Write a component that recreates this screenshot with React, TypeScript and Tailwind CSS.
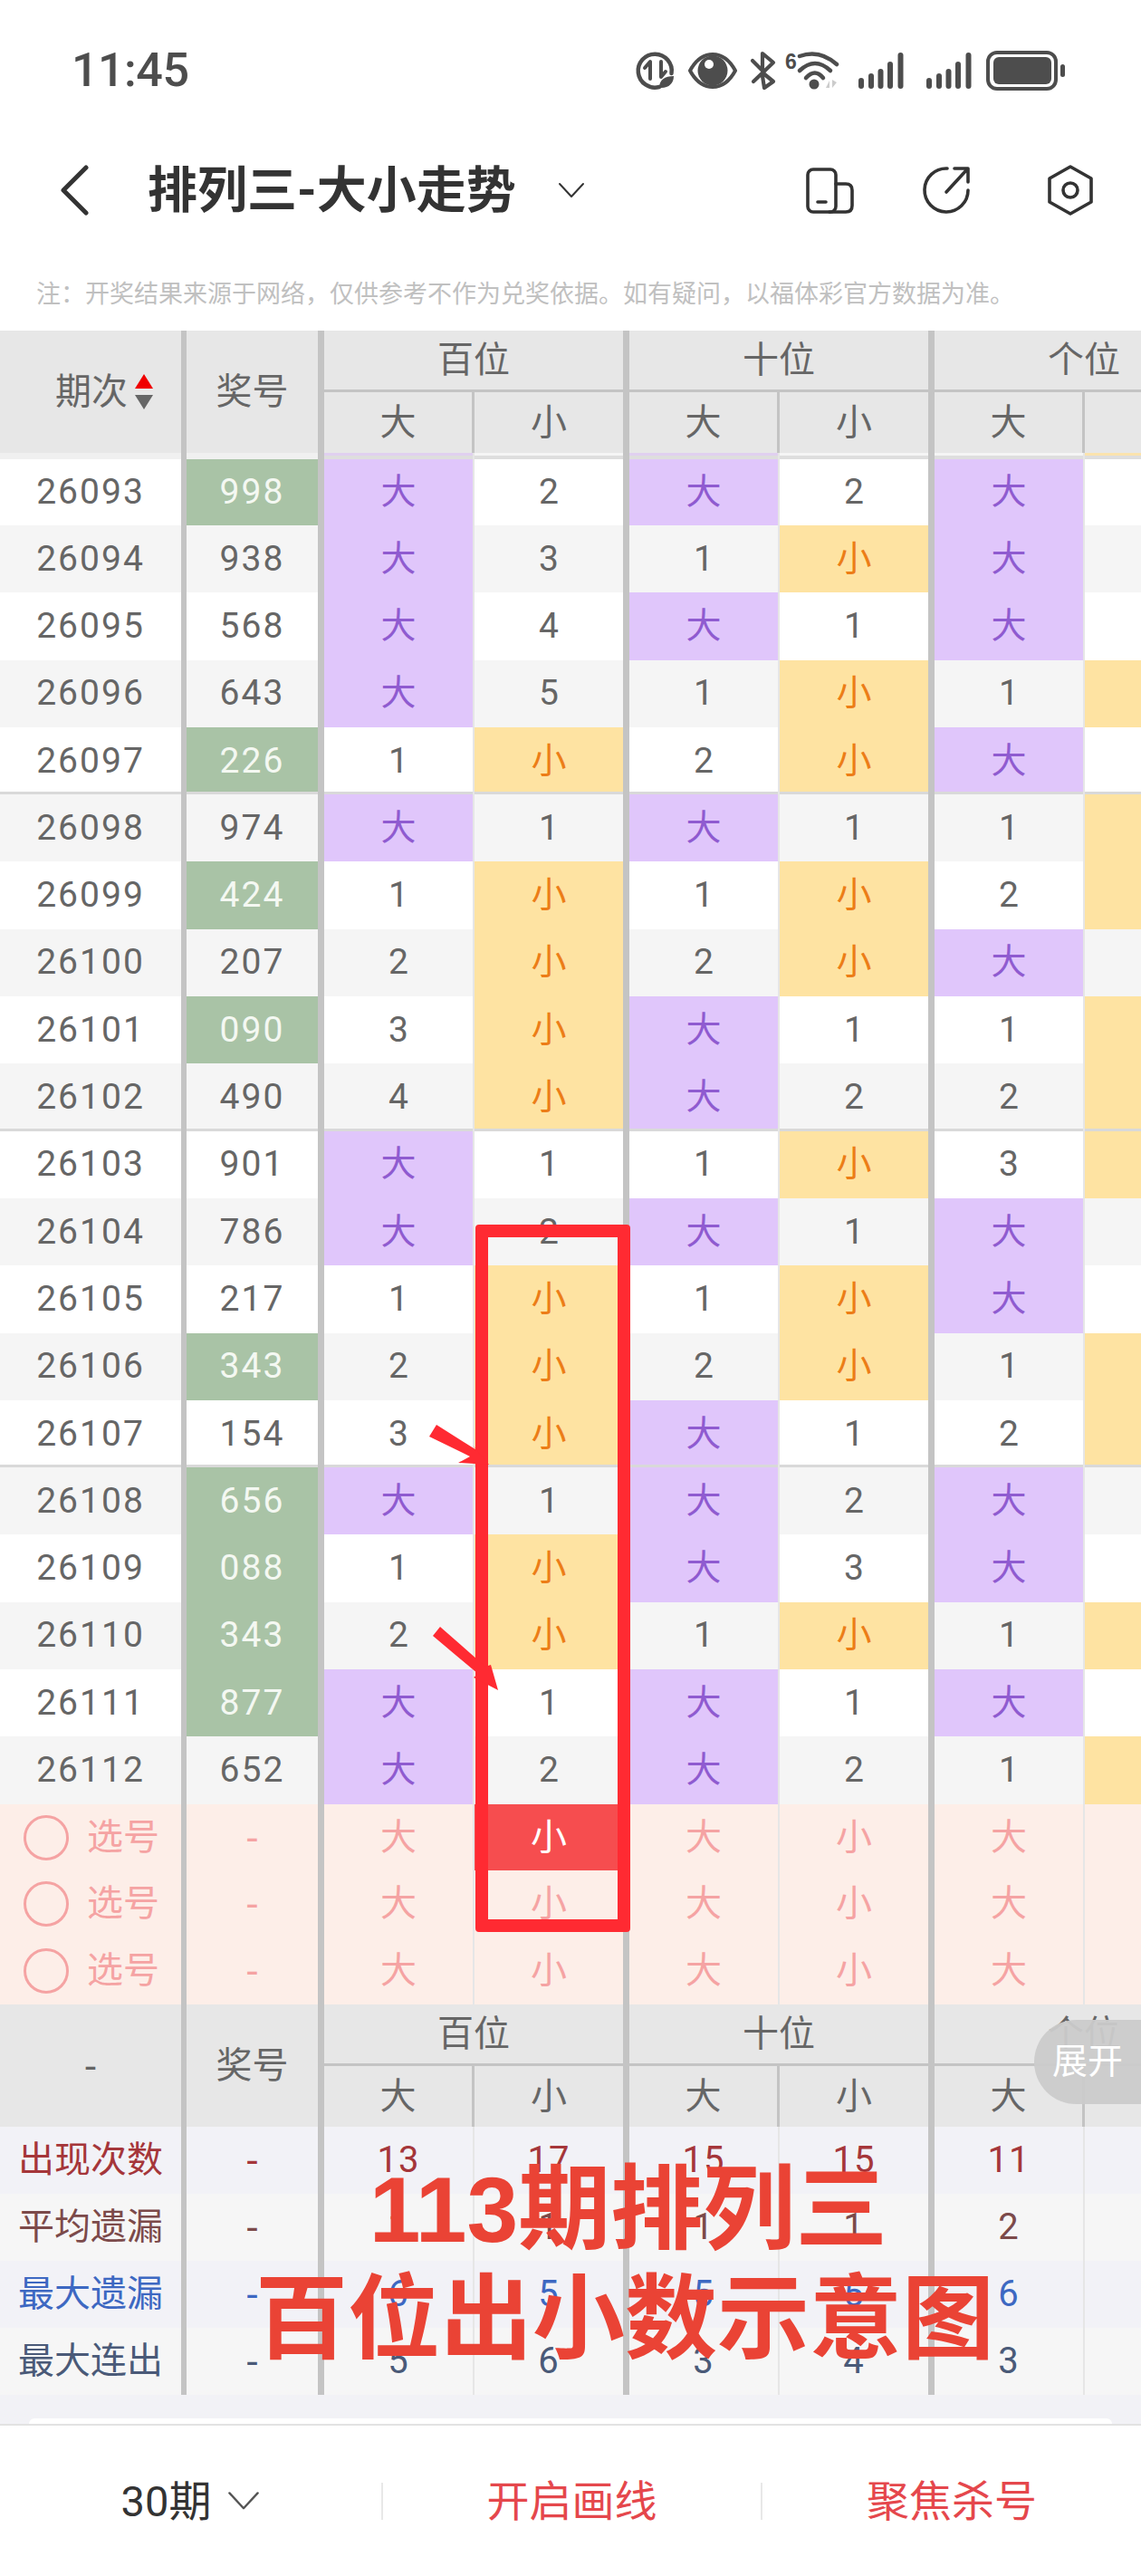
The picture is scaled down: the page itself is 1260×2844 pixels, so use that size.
const fontBase = "font-['Roboto','Noto_Sans_CJK_SC',sans-serif]";

type Row = { issue: string; num: string; cells: (string | number)[] };

const rows: Row[] = [
  { issue: "26093", num: "998", cells: ["大", 2, "大", 2, "大", ""] },
  { issue: "26094", num: "938", cells: ["大", 3, 1, "小", "大", ""] },
  { issue: "26095", num: "568", cells: ["大", 4, "大", 1, "大", ""] },
  { issue: "26096", num: "643", cells: ["大", 5, 1, "小", 1, "小"] },
  { issue: "26097", num: "226", cells: [1, "小", 2, "小", "大", ""] },
  { issue: "26098", num: "974", cells: ["大", 1, "大", 1, 1, "小"] },
  { issue: "26099", num: "424", cells: [1, "小", 1, "小", 2, "小"] },
  { issue: "26100", num: "207", cells: [2, "小", 2, "小", "大", ""] },
  { issue: "26101", num: "090", cells: [3, "小", "大", 1, 1, "小"] },
  { issue: "26102", num: "490", cells: [4, "小", "大", 2, 2, "小"] },
  { issue: "26103", num: "901", cells: ["大", 1, 1, "小", 3, "小"] },
  { issue: "26104", num: "786", cells: ["大", 2, "大", 1, "大", ""] },
  { issue: "26105", num: "217", cells: [1, "小", 1, "小", "大", ""] },
  { issue: "26106", num: "343", cells: [2, "小", 2, "小", 1, "小"] },
  { issue: "26107", num: "154", cells: [3, "小", "大", 1, 2, "小"] },
  { issue: "26108", num: "656", cells: ["大", 1, "大", 2, "大", ""] },
  { issue: "26109", num: "088", cells: [1, "小", "大", 3, "大", ""] },
  { issue: "26110", num: "343", cells: [2, "小", 1, "小", 1, "小"] },
  { issue: "26111", num: "877", cells: ["大", 1, "大", 1, "大", ""] },
  { issue: "26112", num: "652", cells: ["大", 2, "大", 2, 1, "小"] },
];

const groupNames = ["百位", "十位", "个位"];
const repeated = ["226", "424", "090", "343", "656", "088", "877", "998"];

const stats = [
  { label: "出现次数", color: "text-[#a5363a]", values: [13, 17, 15, 15, 11] },
  { label: "平均遗漏", color: "text-[#7c4a4a]", values: [1, 1, 1, 1, 2] },
  { label: "最大遗漏", color: "text-[#3d68c2]", values: [6, 5, 5, 5, 6] },
  { label: "最大连出", color: "text-[#4a5a78]", values: [5, 6, 3, 4, 3] },
];

const COL_A = "w-[206px] shrink-0 border-r-[6px] border-[#c4c4c4]";
const COL_B = "w-[152px] shrink-0 border-r-[7px] border-[#c4c4c4]";
const SUB_A = "w-[166px] shrink-0 border-r-[2px] border-[#e6e6e6]";
const SUB_B = "w-[171px] shrink-0 border-r-[7px] border-[#c4c4c4]";
const DASH = "font-['DejaVu_Sans'] font-normal";

function TableHeader({ first }: { first: React.ReactNode }) {
  return (
    <div className="flex h-[135px] w-[1369px] bg-[#e7e7e7] text-[40px] leading-none text-[#666666]">
      <div className={`${COL_A} flex items-center justify-center`}>{first}</div>
      <div className={`${COL_B} flex items-center justify-center`}>奖号</div>
      {groupNames.map((name) => (
        <div key={name} className="flex w-[337px] shrink-0 flex-col border-r-[7px] border-[#c4c4c4]">
          <div className="flex h-[68px] items-center justify-center border-b-[3px] border-[#c4c4c4]">{name}</div>
          <div className="flex flex-1">
            <div className="flex w-[166px] items-center justify-center border-r-[3px] border-[#c4c4c4]">大</div>
            <div className="flex flex-1 items-center justify-center">小</div>
          </div>
        </div>
      ))}
    </div>
  );
}

function HeaderStrip() {
  const tints = ["bg-[#e0d0f0]", "bg-[#f5f5f5]", "bg-[#e0d0f0]", "bg-[#f5f5f5]", "bg-[#f5f5f5]", "bg-[#fbe3ae]"];
  return (
    <div className="flex h-[7px] w-[1369px] bg-[#dedede]">
      <div className={`${COL_A} bg-[#f0f0f0]`} />
      <div className={`${COL_B} bg-[#f0f0f0]`} />
      {tints.map((tint, i) => (
        <div key={i} className={`${i % 2 ? SUB_B : SUB_A} bg-[#dedede]`}>
          <div className={`h-[3px] ${tint}`} />
        </div>
      ))}
    </div>
  );
}

function DataRow({ row, index }: { row: Row; index: number }) {
  const zebra = index % 2 ? "bg-[#f5f5f5]" : "bg-white";
  const line = index % 5 === 4 && index < 19 ? "shadow-[inset_0_-3px_0_#d9d9d9]" : "";
  const height = index === 0 ? "h-[73px]" : "h-[74.3px]";
  return (
    <div className={`flex ${height} w-[1369px] text-[39px] leading-none text-[#666666]`}>
      <div className={`${COL_A} ${zebra} ${line} flex items-center justify-center tracking-[2px]`}>{row.issue}</div>
      <div
        className={`${COL_B} ${line} flex items-center justify-center tracking-[2px] ${
          repeated.includes(row.num) ? "bg-[#a9c3a6] text-[#f4f8f2]" : zebra
        }`}
      >
        {row.num}
      </div>
      {row.cells.map((cell, i) => (
        <div
          key={i}
          className={`${i % 2 ? SUB_B : SUB_A} ${line} flex items-center justify-center ${
            cell === "大"
              ? "bg-[#e0c6fb] text-[#8f5bd0]"
              : cell === "小"
                ? "bg-[#fee3a2] text-[#ec7d17]"
                : zebra
          }`}
        >
          {cell}
        </div>
      ))}
    </div>
  );
}

function PickRow({ active }: { active?: boolean }) {
  return (
    <div className="flex h-[73.8px] w-[1369px] bg-[#fdeee8] text-[40px] leading-none text-[#f5a3a3]">
      <div className={`${COL_A} flex items-center gap-[20px] pl-[26px]`}>
        <span className="size-[50px] rounded-full border-[3px] border-[#f5a3a3]" />
        选号
      </div>
      <div className={`${COL_B} flex items-center justify-center ${DASH}`}>-</div>
      {[0, 1, 2, 3, 4, 5].map((i) => (
        <div
          key={i}
          className={`${i % 2 ? SUB_B : SUB_A} flex items-center justify-center ${
            active && i === 1 ? "bg-[#f64d4f] text-white" : ""
          }`}
        >
          {i % 2 ? "小" : "大"}
        </div>
      ))}
    </div>
  );
}

function StatRow({ stat, index }: { stat: (typeof stats)[number]; index: number }) {
  return (
    <div
      className={`flex h-[74px] w-[1369px] text-[40px] leading-none ${stat.color} ${
        index % 2 ? "bg-[#f6f6f6]" : "bg-[#f2f2f7]"
      }`}
    >
      <div className={`${COL_A} flex items-center justify-center`}>{stat.label}</div>
      <div className={`${COL_B} flex items-center justify-center ${DASH}`}>-</div>
      {stat.values.map((value, i) => (
        <div key={i} className={`${i % 2 ? SUB_B : SUB_A} flex items-center justify-center tracking-[1px]`}>
          {value}
        </div>
      ))}
      <div className={SUB_B} />
    </div>
  );
}

function StatusIcons() {
  return (
    <svg width="480" height="50" viewBox="700 53 480 50" fill="none" stroke="#4d4d4d" strokeLinecap="round" strokeLinejoin="round">
      {/* data saver */}
      <path d="M728 96 A18.5 18.5 0 1 1 741.5 81" strokeWidth="4.5" />
      <path d="M712 75 L718 68 V87" strokeWidth="4" />
      <path d="M730 68 V85 L735 79" strokeWidth="4" />
      <path d="M728 97 C728 88 734 84 744 84 C744 92 738 98 728 97 Z" fill="#4d4d4d" stroke="none" />
      {/* eye */}
      <path d="M762 78 C775 54 799 54 812 78 C799 102 775 102 762 78 Z" strokeWidth="4" />
      <circle cx="787" cy="78" r="16.5" fill="#4d4d4d" stroke="none" />
      <circle cx="783" cy="71" r="5" fill="#fff" stroke="none" />
      {/* bluetooth */}
      <path d="M831 67 L843 79 M842 76 V59 L854 69 L832 90" strokeWidth="4.2" />
      <path d="M843 81 L854 90 L844 97 L842 84" strokeWidth="4.2" />
      {/* wifi */}
      <text x="867" y="76" fontSize="23" fontWeight="700" fill="#4d4d4d" stroke="none" fontFamily="'Liberation Sans',sans-serif">6</text>
      <path d="M883 62 Q905 54 924 71" strokeWidth="4.5" />
      <path d="M883 78 Q900 62 917 78" strokeWidth="4.5" />
      <path d="M890 86 Q900 75 909 86" strokeWidth="4.5" />
      <circle cx="899" cy="93" r="5.5" fill="#4d4d4d" stroke="none" />
      <path d="M912 97 L916 89 V97 Z M919 88 V97 L924 91 Z" fill="#cccccc" stroke="none" />
      {/* signal */}
      {[948, 1023].map((x) =>
        [
          [0, 86],
          [11, 81],
          [21.5, 76],
          [32, 68],
          [43.5, 58],
        ].map(([dx, top]) => (
          <rect key={`${x}-${dx}`} x={x + dx} y={top} width="6" height={98 - top} rx="3" fill="#4d4d4d" stroke="none" />
        )),
      )}
      {/* battery */}
      <rect x="1091" y="58" width="75" height="40" rx="10" strokeWidth="4" />
      <rect x="1097" y="63" width="64" height="30" rx="6" fill="#4d4d4d" stroke="none" />
      <rect x="1171" y="71" width="5" height="14" rx="2.5" fill="#4d4d4d" stroke="none" />
    </svg>
  );
}

function NavIcons() {
  return (
    <svg width="330" height="70" viewBox="885 177 330 70" fill="none" stroke="#333333" strokeWidth="3.6" strokeLinecap="round" strokeLinejoin="round">
      <rect x="892" y="189" width="31" height="47" rx="6" />
      <path d="M923 205 H934 Q941 205 941 212 V229 Q941 236 934 236 H916" />
      <path d="M903 225 H912" />
      <path d="M1046 188 A24 24 0 1 0 1069 212" />
      <path d="M1045 214 L1068 189 M1054 188 H1069 V203" />
      <path d="M1182 186 L1205 199 V225 L1182 238 L1159 225 V199 Z" />
      <circle cx="1182" cy="212" r="8" />
    </svg>
  );
}

function SortArrows() {
  return (
    <svg width="20" height="39" viewBox="0 0 20 39">
      <path d="M10 0 L20 16 H0 Z" fill="#f00000" />
      <path d="M0 23 H20 L10 39 Z" fill="#666666" />
    </svg>
  );
}

function Chevron({ size, stroke }: { size: number; stroke: string }) {
  return (
    <svg width={size} height={size * 0.6} viewBox="0 0 30 18" fill="none" stroke={stroke} strokeWidth="2" strokeLinecap="round" strokeLinejoin="round">
      <path d="M2 2 L15 16 L28 2" />
    </svg>
  );
}

export default function App() {
  return (
    <div className={`relative flex h-[2844px] w-[1260px] flex-col overflow-hidden bg-white ${fontBase}`}>
      <div className="flex h-[156px] shrink-0 items-center justify-between pl-[79px] pr-[80px]">
        <span className="font-['Roboto'] text-[52px] font-medium leading-none tracking-[-0.5px] text-[#4d4d4d]">11:45</span>
        <StatusIcons />
      </div>

      <div className="flex h-[108px] shrink-0 items-center">
        <svg className="ml-[66px]" width="32" height="56" viewBox="0 0 32 56" fill="none" stroke="#333333" strokeWidth="5" strokeLinecap="round" strokeLinejoin="round">
          <path d="M29 3 L4 28 L29 53" />
        </svg>
        <h1 className="ml-[65px] text-[55px] font-bold leading-none text-[#333333]">排列三-大小走势</h1>
        <span className="ml-[46px]">
          <Chevron size={30} stroke="#333333" />
        </span>
        <span className="ml-auto mr-[45px]">
          <NavIcons />
        </span>
      </div>

      <div className="flex h-[101px] shrink-0 items-end pb-[26px] pl-[40px] text-[27px] leading-none text-[#c0c0c0]">
        注：开奖结果来源于网络，仅供参考不作为兑奖依据。如有疑问，以福体彩官方数据为准。
      </div>

      <div className="flex flex-col overflow-hidden">
        <TableHeader
          first={
            <span className="flex items-center gap-[8px] pl-[30px]">
              期次
              <SortArrows />
            </span>
          }
        />
        <HeaderStrip />
        {rows.map((row, i) => (
          <DataRow key={row.issue} row={row} index={i} />
        ))}
        <PickRow active />
        <PickRow />
        <PickRow />
        <TableHeader first={<span className={DASH}>-</span>} />
        {stats.map((stat, i) => (
          <StatRow key={stat.label} stat={stat} index={i} />
        ))}
      </div>

      <div className="flex h-[32px] shrink-0 items-end bg-[#f2f2f6] px-[32px]">
        <div className="h-[6px] w-full rounded-t-[12px] bg-white" />
      </div>

      <div className="flex flex-1 items-center border-t-[2px] border-[#e2e2e2] bg-white text-[47px] leading-none">
        <div className="flex w-[421px] items-center justify-center gap-[18px] text-[#333333]">
          30期
          <Chevron size={36} stroke="#555555" />
        </div>
        <div className="flex h-[41px] w-[421px] items-center justify-center border-x-[2px] border-[#e8e8e8] text-[#e5474c]">开启画线</div>
        <div className="flex w-[418px] items-center justify-center text-[#e5474c]">聚焦杀号</div>
      </div>

      {/* hand drawn annotations on top of the screenshot */}
      <div className="absolute left-[525px] top-[1352px] h-[781px] w-[171px] rounded-[4px] border-[14px] border-[#ff2a32]" />
      <svg className="absolute left-[470px] top-[1570px]" width="90" height="310" viewBox="470 1570 90 310" fill="#ff2a32">
        <path d="M474 1586 L482 1573 L528 1602 L522 1596 L540 1617 L506 1615 L519 1608 Z" />
        <path d="M478 1806 L486 1796 L536 1840 L542 1838 L550 1866 L523 1852 L528 1848 Z" />
      </svg>
      <div className="absolute right-0 top-[2230px] flex h-[93px] w-[118px] items-center justify-center rounded-l-full bg-[#cbcbcb]/95 text-[39px] leading-none text-white">
        展开
      </div>
      <div className="absolute left-[270px] top-[2380px] w-[840px] text-center text-[102px] font-bold leading-[121px] text-[#ea4335]">
        <div className="whitespace-nowrap pl-[8px] font-['Liberation_Sans','Noto_Sans_CJK_SC',sans-serif]">113期排列三</div>
        <div className="whitespace-nowrap">百位出小数示意图</div>
      </div>
    </div>
  );
}
